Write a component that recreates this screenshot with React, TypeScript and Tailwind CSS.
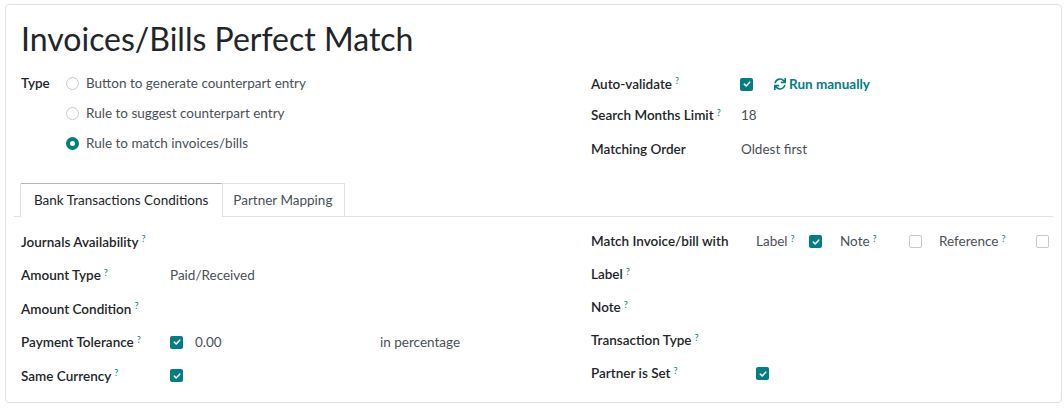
import { FaSync } from "react-icons/fa"

const teal = "#017e84"

function Help() {
  return <sup className="ml-[3px] text-[9px] font-normal text-[#017e84]">?</sup>
}

function Check({ on }: { on: boolean }) {
  if (!on) {
    return <span className="inline-block shrink-0 w-[13px] h-[13px] rounded-[2px] border border-[#c5c9cc] bg-white" />
  }
  return (
    <span className="inline-flex shrink-0 w-[13px] h-[13px] rounded-[2px] bg-[#017e84] items-center justify-center">
      <svg width="8" height="8" viewBox="0 0 8 8">
        <path d="M1.3 4.2 L3.2 6 L6.7 2.2" stroke="white" strokeWidth="1.6" fill="none" strokeLinecap="round" strokeLinejoin="round" />
      </svg>
    </span>
  )
}

function Radio({ on, label }: { on: boolean; label: string }) {
  return (
    <div className="flex items-center h-[30px] gap-[7px]">
      {on ? (
        <span className="w-[13px] h-[13px] rounded-full border-[4px] border-[#017e84] bg-white" />
      ) : (
        <span className="w-[13px] h-[13px] rounded-full border border-[#c5c9cc] bg-white" />
      )}
      <span className="text-[#495057]">{label}</span>
    </div>
  )
}

function Label({ text, help }: { text: string; help?: boolean }) {
  return (
    <span className="font-semibold text-[#212529] whitespace-nowrap">
      {text}
      {help && <Help />}
    </span>
  )
}

const leftRows = [
  { label: "Journals Availability", value: null },
  { label: "Amount Type", value: "Paid/Received" },
  { label: "Amount Condition", value: null },
  { label: "Payment Tolerance", value: "tolerance" },
  { label: "Same Currency", value: "check" },
]

const rightRows = [
  { label: "Match Invoice/bill with", help: false, value: "match" },
  { label: "Label", help: true, value: null },
  { label: "Note", help: true, value: null },
  { label: "Transaction Type", help: true, value: null },
  { label: "Partner is Set", help: true, value: "check" },
]

export default function App() {
  return (
    <div className="bg-white w-[1064px] h-[408px] pt-[4px] pl-[5px] text-[13.5px] font-['Lato',sans-serif]">
      <div className="w-[1057px] h-[399px] border border-[#dee2e6] rounded-[4px] px-[8px]">
        <h1 className="pl-[7px] pt-[12px] h-[63px] text-[32px] leading-[44px] text-[#212529]">
          Invoices/Bills Perfect Match
        </h1>

        <div className="flex pl-[7px]">
          <div className="w-[570px] shrink-0 flex">
            <div className="w-[45px] h-[30px] flex items-center">
              <Label text="Type" />
            </div>
            <div className="flex flex-col">
              <Radio on={false} label="Button to generate counterpart entry" />
              <Radio on={false} label="Rule to suggest counterpart entry" />
              <Radio on={true} label="Rule to match invoices/bills" />
            </div>
          </div>
          <div className="flex flex-col">
            <div className="flex items-center h-[32px]">
              <div className="w-[149px]">
                <Label text="Auto-validate" help />
              </div>
              <Check on />
              <span className="ml-[21px] flex items-center gap-[3px] font-bold" style={{ color: teal }}>
                <FaSync className="w-[12px] h-[12px]" />
                Run manually
              </span>
            </div>
            <div className="flex items-center h-[31px]">
              <div className="w-[150px]">
                <Label text="Search Months Limit" help />
              </div>
              <span className="text-[#495057]">18</span>
            </div>
            <div className="flex items-center h-[36px]">
              <div className="w-[150px]">
                <Label text="Matching Order" />
              </div>
              <span className="text-[#495057]">Oldest first</span>
            </div>
          </div>
        </div>

        <div className="mt-[16px] flex border-b border-[#dee2e6] pl-[6px] h-[34px]">
          <div className="pl-[13px] pr-[14px] flex items-center border border-b-0 border-[#dee2e6] border-t-[#adb5bd] bg-white text-[#212529] -mb-px rounded-t-[2px]">
            Bank Transactions Conditions
          </div>
          <div className="pl-[10px] pr-[12px] flex items-center border border-l-0 border-b-0 border-[#dee2e6] text-[#495057]">
            Partner Mapping
          </div>
        </div>

        <div className="flex pl-[7px] pt-[8px]">
          <div className="w-[570px] shrink-0 flex flex-col">
            {leftRows.map((r) => (
              <div key={r.label} className="flex items-center h-[33.5px]">
                <div className="w-[149px]">
                  <Label text={r.label} help />
                </div>
                {r.value === "Paid/Received" && <span className="text-[#495057]">Paid/Received</span>}
                {r.value === "check" && <Check on />}
                {r.value === "tolerance" && (
                  <div className="flex items-center">
                    <Check on />
                    <span className="ml-[12px] w-[185px] text-[#495057]">0.00</span>
                    <span className="text-[#495057]">in percentage</span>
                  </div>
                )}
              </div>
            ))}
          </div>
          <div className="flex flex-col">
            {rightRows.map((r) => (
              <div key={r.label} className="flex items-center h-[33px]">
                <div className="w-[165px]">
                  <Label text={r.label} help={r.help} />
                </div>
                {r.value === "check" && <Check on />}
                {r.value === "match" && (
                  <div className="flex items-center text-[#495057]">
                    <span className="w-[53px]">
                      Label
                      <Help />
                    </span>
                    <Check on />
                    <span className="ml-[18px] w-[69px]">
                      Note
                      <Help />
                    </span>
                    <Check on={false} />
                    <span className="ml-[17px] w-[97px]">
                      Reference
                      <Help />
                    </span>
                    <Check on={false} />
                  </div>
                )}
              </div>
            ))}
          </div>
        </div>
      </div>
    </div>
  )
}
